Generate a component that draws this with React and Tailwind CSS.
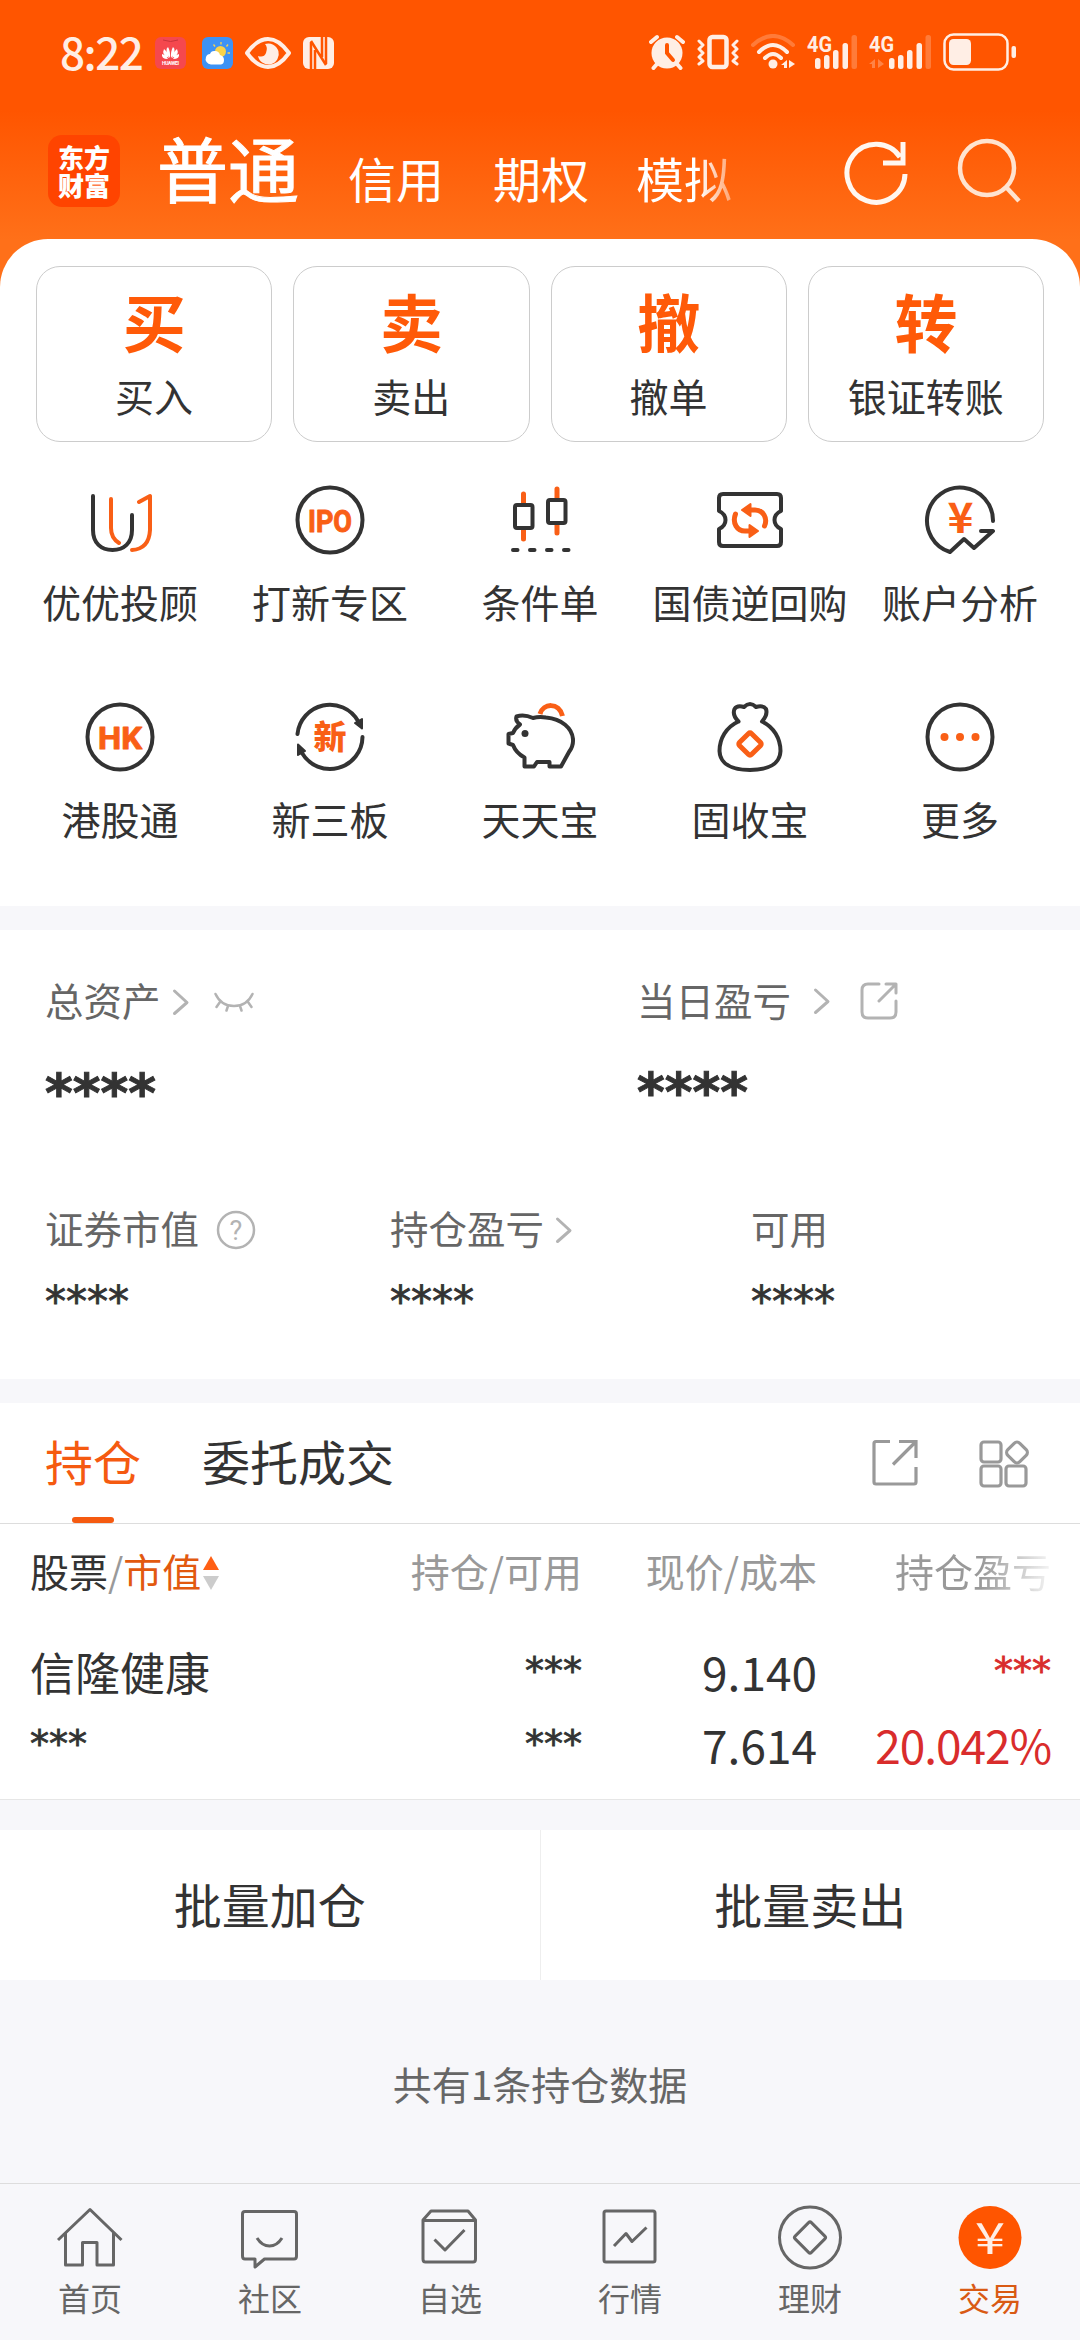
import React, { useState } from 'react';

const QuickIcon = ({ children }) => (
  <svg width="72" height="72" viewBox="0 0 72 72" fill="none" stroke="#333333" strokeWidth="4" strokeLinecap="round" strokeLinejoin="round">
    {children}
  </svg>
);

const NavIcon = ({ children }) => (
  <svg width="72" height="72" viewBox="0 0 72 72" fill="none" stroke="#666666" strokeWidth="3" strokeLinejoin="round">
    {children}
  </svg>
);

const Chevron = () => (
  <svg width="18" height="28" viewBox="0 0 18 28" fill="none" stroke="#b3b3b3" strokeWidth="3" strokeLinecap="round" strokeLinejoin="round">
    <path d="M2.500 3l12.500 11.500L2.500 25.500" />
  </svg>
);

const cards = [
  { icon: '买', label: '买入' },
  { icon: '卖', label: '卖出' },
  { icon: '撤', label: '撤单' },
  { icon: '转', label: '银证转账' },
];

const quickLinks = [
  {
    label: '优优投顾',
    icon: (
      <QuickIcon>
        <path d="M9 12V46C9 59 17 66 28.500 66S48 59 48 46V31" />
        <path stroke="#f95f16" d="M27 15V44Q27 54 35 59" />
        <path stroke="#f95f16" d="M55 18L66 12V46Q65 65 48 66" />
      </QuickIcon>
    ),
  },
  {
    label: '打新专区',
    icon: (
      <QuickIcon>
        <circle cx="36" cy="36" r="32.500" />
        <text x="14" y="47.500" fontSize="32" fontWeight="700" textLength="44" lengthAdjust="spacingAndGlyphs" fill="#f95f16" stroke="#f95f16" strokeWidth="1" className="font-[Roboto]">IPO</text>
      </QuickIcon>
    ),
  },
  {
    label: '条件单',
    icon: (
      <QuickIcon>
        <path stroke="#f95f16" d="M19.500 10V19M19.500 46V55M53 5V14M53 40V49" strokeWidth="5" />
        <rect x="11" y="21" width="17.500" height="23" rx="2" />
        <rect x="44" y="16" width="17.500" height="23" rx="2" />
        <path d="M9 66H13.500M26 66H30.500M43 66H47.500M60 66H64.500" />
      </QuickIcon>
    ),
  },
  {
    label: '国债逆回购',
    icon: (
      <QuickIcon>
        <path d="M9 10H63Q67 10 67 14V27Q60.500 30 60.500 36T67 45V58Q67 62 63 62H9Q5 62 5 58V45Q11.500 42 11.500 36T5 27V14Q5 10 9 10Z" />
        <path stroke="#f95f16" strokeWidth="5" d="M35 26H41C49 26 54 34 50.500 42M37 47H31C23 47 18 39 21.500 30" />
        <path fill="#f95f16" stroke="#f95f16" strokeWidth="2" d="M28 26L36.500 20V32ZM44 47L35.500 41V53Z" />
      </QuickIcon>
    ),
  },
  {
    label: '账户分析',
    icon: (
      <QuickIcon>
        <path d="M69 37A33 33 0 1 0 26 68L40 55L50 64L69 47H57" />
        <text x="23.500" y="49" fontSize="42" fontWeight="700" textLength="26" lengthAdjust="spacingAndGlyphs" fill="#f95f16" stroke="none">¥</text>
      </QuickIcon>
    ),
  },
  {
    label: '港股通',
    icon: (
      <QuickIcon>
        <circle cx="36" cy="36" r="32.500" />
        <text x="14" y="47.500" fontSize="32" fontWeight="700" textLength="44" lengthAdjust="spacingAndGlyphs" fill="#f95f16" stroke="#f95f16" strokeWidth="1" className="font-[Roboto]">HK</text>
      </QuickIcon>
    ),
  },
  {
    label: '新三板',
    icon: (
      <QuickIcon>
        <path d="M3.500 33A32.500 32.500 0 0 1 64 20M68.500 36A32.500 32.500 0 0 1 8 52" />
        <path fill="#333333" strokeWidth="2" d="M68 18V27.500L61 22ZM4 54V43.500L11 50Z" />
        <text x="36" y="48" textAnchor="middle" fontSize="33" fontWeight="900" fill="#f95f16" stroke="none">新</text>
      </QuickIcon>
    ),
  },
  {
    label: '天天宝',
    icon: (
      <QuickIcon>
        <path d="M12.500 15.500Q20 13 29 17Q35 15.500 42 16.500C58 18 68 27 69 38Q69.500 45 65 51L57 65.500H45.500V61H33L30 65.500H20.500V56.500Q12 52 9 44L4.500 42.500V33L9 32Q11 27 16 23.500Q11 20 12.500 15.500Z" />
        <path stroke="#f95f16" strokeWidth="5" strokeLinecap="butt" d="M36 13C39 2 55 1 58.500 15" />
        <circle cx="21" cy="32.500" r="3.500" fill="#333333" stroke="none" />
      </QuickIcon>
    ),
  },
  {
    label: '固收宝',
    icon: (
      <QuickIcon>
        <path d="M24.500 20.500Q18 14 20.500 8Q23 4 30 6Q36 0 42 6Q49 4 52 8Q54 14 48 20.500C60 26 66.500 38 66.500 50C66 63 54 69 36 69S6 63 5.500 50C5.500 38 12 26 24.500 20.500" />
        <rect x="27.500" y="34.500" width="17" height="17" rx="2" transform="rotate(45 36 43)" stroke="#f95f16" strokeWidth="5" />
      </QuickIcon>
    ),
  },
  {
    label: '更多',
    icon: (
      <QuickIcon>
        <circle cx="36" cy="36" r="32.500" />
        <g fill="#f95f16" stroke="none">
          <circle cx="20.500" cy="36" r="4" />
          <circle cx="36" cy="36" r="4" />
          <circle cx="51.500" cy="36" r="4" />
        </g>
      </QuickIcon>
    ),
  },
];

const navItems = [
  {
    label: '首页',
    icon: (
      <NavIcon>
        <path d="M4 39L36 8.500L67.500 39M11.500 32V64H28.500V41.500H43V64H59.500V32" />
      </NavIcon>
    ),
  },
  {
    label: '社区',
    icon: (
      <NavIcon>
        <path d="M11 10.500H60Q62.500 10.500 62.500 13V55Q62.500 58 60 58H30.500L21 66V58H11Q8.500 58 8.500 55V13Q8.500 10.500 11 10.500Z" />
        <path d="M23 37Q28 45 35.500 45T48 37" />
      </NavIcon>
    ),
  },
  {
    label: '自选',
    icon: (
      <NavIcon>
        <path d="M9 19L17 10H54L61.500 19V58Q61.500 61 59 61H11.500Q9 61 9 58ZM9 19.500H61.500M20.500 38.500L31 49L50.500 29" />
      </NavIcon>
    ),
  },
  {
    label: '行情',
    icon: (
      <NavIcon>
        <rect x="10" y="10" width="51" height="51" rx="2" />
        <path d="M20 45L32 32.500L38 40.500L52.500 26.500" />
      </NavIcon>
    ),
  },
  {
    label: '理财',
    icon: (
      <NavIcon>
        <circle cx="36" cy="36.500" r="30.500" />
        <rect x="24.500" y="25" width="23" height="23" rx="2" transform="rotate(45 36 36.500)" />
      </NavIcon>
    ),
  },
  {
    label: '交易',
    icon: (
      <NavIcon>
        <circle cx="36" cy="36.500" r="31.500" fill="#ff5500" stroke="none" />
        <text x="21" y="53" fontSize="43" textLength="30" lengthAdjust="spacingAndGlyphs" fill="#ffeee5" stroke="none">¥</text>
      </NavIcon>
    ),
  },
];

const Signal = ({ idle }) => (
  <svg width={idle ? 64 : 52} height="36" viewBox={idle ? '0 0 64 36' : '0 0 52 36'} fill="#ffeee5" className="overflow-visible">
    <text x="0" y="17.500" fontSize="22" fontWeight="700" textLength="25" lengthAdjust="spacingAndGlyphs" className="font-[Roboto]">4G</text>
    <g transform={idle ? 'translate(12 0)' : undefined}>
      <rect x="8" y="24" width="5.500" height="11" rx="2.500" />
      <rect x="17" y="21" width="5.500" height="14" rx="2.500" />
      <rect x="26" y="16" width="5.500" height="19" rx="2.500" />
      <rect x="35.500" y="9" width="5.500" height="26" rx="2.500" />
      <rect x="44.500" y="1" width="5.500" height="34" rx="2.500" opacity="0.250" />
    </g>
    {idle && <path opacity="0.300" d="M6 25V34H3V30H0ZM9 25L15 30L9 34Z" />}
  </svg>
);

const StatusBar = () => (
  <div className="flex h-[106px] items-center justify-between pl-[60px] pr-[63px]">
    <div className="flex items-center">
      <span className="-mt-[5px] w-[95px] text-[44px] font-medium leading-none tracking-[-1.5px] text-[#ffeee5]">8:22</span>
      <svg width="31" height="32" viewBox="0 0 31 32" className="mr-4">
        <rect width="31" height="32" rx="6" fill="#f5484e" />
        <path d="M8 3Q15.500 6 23 3" stroke="#c9353b" fill="none" />
        <g fill="#fff">
          <path d="M15 21Q9 13 13 10Q15.500 14 15 21ZM16 21Q22 13 18 10Q15.500 14 16 21ZM14 21Q6 18 9 12Q13 15 14 21ZM17 21Q25 18 22 12Q18 15 17 21ZM13 22Q6 22 7 17Q11 18 13 22ZM18 22Q25 22 24 17Q20 18 18 22Z" />
          <text x="7" y="27.500" fontSize="5" fontWeight="700" textLength="17" className="font-[Roboto]">HUAWEI</text>
        </g>
      </svg>
      <svg width="31" height="32" viewBox="0 0 31 32" className="mr-3">
        <rect width="31" height="32" rx="6" fill="#3d92f5" />
        <circle cx="18.500" cy="14.500" r="5.500" fill="#f9d34a" />
        <path d="M19 5V7.500M11.500 7.500L13 9.500M26 7.500L24.500 9.500M25.500 16H28" stroke="#f9d34a" strokeWidth="1.300" />
        <path d="M9 27.500A5.500 5.500 0 0 1 4 20Q5 17 8 17Q9 13.500 13 14Q17 14 18 18Q22 19 22 23Q22 27 19 27.500Z" fill="#fff" />
      </svg>
      <svg width="46" height="34" viewBox="0 0 46 34" fill="none" className="mr-3">
        <path d="M2 17Q12 3 23 3T44 17Q34 31 23 31T2 17Z" stroke="#ffeee5" strokeWidth="4" strokeLinejoin="round" />
        <path d="M20 8A10.500 10.500 0 1 1 13 20Q19 22 21 17Q23 11 20 8Z" fill="#ffeee5" />
      </svg>
      <svg width="31" height="32" viewBox="0 0 31 32">
        <rect width="31" height="32" rx="6" fill="#ffeee5" />
        <path d="M8 32V5M23 0V27" stroke="#ff5500" strokeWidth="2.500" />
        <path d="M8 4L23 28M12 13V32M19 20V0" stroke="#ff5500" strokeWidth="2.500" />
      </svg>
    </div>
    <div className="-mt-[2px] flex items-center">
      <svg width="36" height="36" viewBox="0 0 36 36" fill="none" className="mr-3">
        <circle cx="18" cy="19" r="15.500" fill="#ffeee5" />
        <path d="M2 8L8 3M34 8L28 3M8 30L4.500 34M28 30L31.500 34" stroke="#ffeee5" strokeWidth="4" strokeLinecap="round" />
        <path d="M18 11V19L24 26" stroke="#ff5500" strokeWidth="4" strokeLinecap="round" />
      </svg>
      <svg width="42" height="36" viewBox="0 0 42 36" fill="none" stroke="#ffeee5" strokeLinejoin="round" strokeLinecap="round" className="mr-3">
        <rect x="12.500" y="3" width="17" height="30" rx="3" strokeWidth="4.500" />
        <path d="M2 7L6 11L2 15L6 19L2 23L6 27L2 30M40 7L36 11L40 15L36 19L40 23L36 27L40 30" strokeWidth="3" />
      </svg>
      <svg width="44" height="36" viewBox="0 0 44 36" fill="none" stroke="#ffeee5" strokeWidth="4" strokeLinecap="round" className="mr-3">
        <path d="M2 11Q22 -7 42 11" opacity="0.250" />
        <path d="M8 18Q22 4 36 18M14 24Q22 16 30 24" />
        <circle cx="22" cy="30" r="4.500" fill="#ffeee5" stroke="none" />
        <path d="M36 26V34H33V31H30ZM38 26L44 30L38 34Z" fill="#ffeee5" stroke="none" />
      </svg>
      <Signal />
      <div className="w-[10px]"></div>
      <Signal idle />
      <svg width="74" height="38" viewBox="0 0 74 38" className="ml-[10px]">
        <rect x="1.500" y="1.500" width="63" height="35" rx="9" fill="none" stroke="#ffeee5" strokeWidth="2.500" />
        <rect x="6" y="6" width="22" height="26" rx="4.500" fill="#ffeee5" />
        <rect x="68.500" y="13" width="4.500" height="12" rx="2" fill="#ffeee5" />
      </svg>
    </div>
  </div>
);

const Header = () => (
  <div className="flex h-[133px] items-end text-white">
    <div className="mb-8 ml-12 flex h-[72px] w-[72px] items-center justify-center rounded-[14px] bg-[#ff4400]">
      <span className="w-[52px] break-all text-[26px] font-black leading-[28px]">东方财富</span>
    </div>
    <h1 className="mb-[35px] ml-[37px] w-[191px] text-[71px] leading-[76px] [-webkit-text-stroke:1px_#ffffff]">普通</h1>
    <span className="mb-[36px] w-[145px] text-[48px] leading-[52px]">信用</span>
    <span className="mb-[36px] w-[143px] text-[48px] leading-[52px]">期权</span>
    <span className="mb-[36px] w-[96px] bg-linear-to-r from-white from-65% to-white/40 bg-clip-text text-[48px] leading-[52px] text-transparent">模拟</span>
    <svg width="66" height="68" viewBox="0 0 66 68" fill="none" stroke="#fff7f0" strokeWidth="5" className="mb-[34px] ml-[111px]">
      <path d="M62 37A29 29 0 1 1 57 20M60 5V26H40" />
    </svg>
    <svg width="66" height="68" viewBox="0 0 66 68" fill="none" stroke="#ffe3cf" strokeWidth="4.500" className="mb-[34px] ml-[48px]">
      <circle cx="30" cy="31" r="27" />
      <path d="M49 50L62 64" />
    </svg>
  </div>
);

const Stars = ({ big }) =>
  big ? (
    <div className="font-['DejaVu_Sans'] text-[53px] font-bold leading-[54px] text-[#333333] [-webkit-text-stroke:1px_#333333]">****</div>
  ) : (
    <div className="font-['DejaVu_Sans'] text-[42px] leading-[42px] text-[#333333] [-webkit-text-stroke:0.8px_#333333]">****</div>
  );

const Assets = () => (
  <div className="h-[449px] bg-white pl-[45px] text-[38.5px] leading-[44px] text-[#666666]">
    <div className="flex pt-[48px]">
      <div className="w-[592px]">
        <div className="flex h-[44px] items-center">
          <span className="-mt-[3px]">总资产</span>
          <div className="ml-[11px] mt-[3px]"><Chevron /></div>
          <svg width="40" height="20" viewBox="0 0 40 20" fill="none" stroke="#b3b3b3" strokeWidth="2.500" strokeLinecap="round" className="ml-[24px] mt-1">
            <path d="M1.500 2Q7 14 20 14T38.500 2M6 10L2.500 15M14 14L12.500 18.500M26 14L27.500 18.500M34 10L37.500 15" />
          </svg>
        </div>
        <div className="pt-[45px]"><Stars big /></div>
      </div>
      <div>
        <div className="flex h-[44px] items-center">
          <span className="-mt-[2px]">当日盈亏</span>
          <div className="ml-[22px] mt-[1px]"><Chevron /></div>
          <svg width="40" height="40" viewBox="0 0 40 40" fill="none" stroke="#b3b3b3" strokeWidth="3" strokeLinecap="round" strokeLinejoin="round" className="ml-[28px] mt-[2px]">
            <path d="M20 3H9Q3 3 3 9V31Q3 37 9 37H31Q37 37 37 31V20M27 3H37V12M36 4L20 20" />
          </svg>
        </div>
        <div className="pt-[44px]"><Stars big /></div>
      </div>
    </div>
    <div className="flex pt-[85px]">
      <div className="w-[345px]">
        <div className="flex h-[44px] items-center">
          <span className="-mt-[3px]">证券市值</span>
          <svg width="40" height="40" viewBox="0 0 40 40" className="ml-[17px] mt-1">
            <circle cx="20" cy="20" r="18" fill="none" stroke="#b3b3b3" strokeWidth="2.500" />
            <text x="20" y="30" textAnchor="middle" fontSize="27" fill="#b3b3b3" className="font-[Roboto]">?</text>
          </svg>
        </div>
        <div className="pt-[31px]"><Stars /></div>
      </div>
      <div className="w-[361px]">
        <div className="flex h-[44px] items-center">
          <span className="-mt-[3px]">持仓盈亏</span>
          <div className="ml-[11px] mt-1"><Chevron /></div>
        </div>
        <div className="pt-[31px]"><Stars /></div>
      </div>
      <div>
        <div className="flex h-[44px] items-center"><span className="-mt-[3px]">可用</span></div>
        <div className="pt-[31px]"><Stars /></div>
      </div>
    </div>
  </div>
);

const Holdings = () => {
  const [tab, setTab] = useState('持仓');
  return (
    <div className="bg-white">
      <div className="flex h-[121px] items-start justify-between border-b border-[#dddddd] pl-[45px] pr-[51px]">
        <div className="flex gap-[61px] text-[48px] leading-[54px]">
          {['持仓', '委托成交'].map((t) => (
            <button key={t} type="button" onClick={() => setTab(t)} className="flex h-[120px] flex-col items-center justify-between pt-[30px]">
              <span className={tab === t ? 'text-[#f55a10]' : 'text-[#333333]'}>{t}</span>
              {tab === t ? <div className="h-[6px] w-[42px] rounded-full bg-[#f55a10]"></div> : null}
            </button>
          ))}
        </div>
        <div className="flex gap-[57px] pt-[35px]">
          <svg width="50" height="50" viewBox="0 0 50 50" fill="none" stroke="#999999" strokeWidth="3.200">
            <path d="M20 3.500H6Q4 3.500 4 5.500V44Q4 46 6 46H44Q46 46 46 44V29M29 3.500H46V20M46 3.500L23 26.500" />
          </svg>
          <svg width="52" height="52" viewBox="0 0 52 52" fill="none" stroke="#999999" strokeWidth="3.200">
            <rect x="4" y="4" width="20" height="20" rx="3" />
            <rect x="4" y="28" width="20" height="20" rx="3" />
            <rect x="29" y="28" width="20" height="20" rx="3" />
            <rect x="31.500" y="6" width="17" height="17" rx="4" transform="rotate(45 40 14.500)" />
          </svg>
        </div>
      </div>
      <div className="flex h-[92px] items-center pl-[30px] pr-[29px] text-[39px] leading-[44px] text-[#999999]">
        <div className="flex w-[300px] items-center">
          <span className="text-[#333333]">股票</span>
          <span>/</span>
          <span className="text-[#e2590f]">市值</span>
          <svg width="16" height="34" viewBox="0 0 16 34" className="ml-[2px] mt-[6px]">
            <path d="M8 0L16 14H0Z" fill="#ff5f14" />
            <path d="M8 34L16 20H0Z" fill="#cccccc" />
          </svg>
        </div>
        <div className="w-[252px] text-right">持仓/可用</div>
        <div className="w-[235px] text-right">现价/成本</div>
        <div className="flex flex-1 justify-end">
          <span className="bg-linear-to-r from-[#999999] from-55% to-[#999999]/10 bg-clip-text text-transparent">持仓盈亏</span>
        </div>
      </div>
      <div className="flex h-[184px] border-b border-[#e6e6e6] pl-[30px] pr-[29px] pt-[19px] text-[46px] leading-[73px] text-[#333333]">
        <div className="w-[300px]">
          <div className="text-[45px]">信隆健康</div>
          <div className="font-['DejaVu_Sans'] text-[38px] [-webkit-text-stroke:0.8px_#333333]">***</div>
        </div>
        <div className="w-[252px] text-right font-['DejaVu_Sans'] text-[38px] [-webkit-text-stroke:0.8px_#333333]">
          <div>***</div>
          <div>***</div>
        </div>
        <div className="w-[235px] text-right">
          <div>9.140</div>
          <div>7.614</div>
        </div>
        <div className="flex-1 text-right text-[#d92c2c]">
          <div className="font-['DejaVu_Sans'] text-[38px] [-webkit-text-stroke:0.8px_#d92c2c]">***</div>
          <div className="tracking-[-1px]">20.042%</div>
        </div>
      </div>
    </div>
  );
};

const App = () => {
  return (
    <div className="h-[2340px] w-[1080px] overflow-hidden bg-[#f7f7fa] font-['Noto_Sans_CJK_SC',sans-serif]">
      <div className="bg-[linear-gradient(#ff5500_110px,#ff7019_240px)]">
        <StatusBar />
        <Header />
        <div className="h-[667px] rounded-t-[48px] bg-white pt-[27px]">
          <div className="grid grid-cols-4 gap-[21px] px-9">
            {cards.map((c) => (
              <div key={c.label} className="flex h-[176px] flex-col items-center rounded-[24px] border border-[#cccccc]">
                <span className="mt-[21px] text-[63px] font-bold leading-[64px] text-[#ff5a08]">{c.icon}</span>
                <span className="mt-[21px] text-[39px] leading-[44px] text-[#333333]">{c.label}</span>
              </div>
            ))}
          </div>
          <div className="grid grid-cols-5 px-[15px] pt-[42px]">
            {quickLinks.map((q) => (
              <div key={q.label} className="flex h-[217px] flex-col items-center">
                {q.icon}
                <span className="mt-[23px] whitespace-nowrap text-[39px] leading-[44px] text-[#333333]">{q.label}</span>
              </div>
            ))}
          </div>
        </div>
      </div>

      <div className="h-6"></div>
      <Assets />
      <div className="h-6"></div>
      <Holdings />

      <div className="mt-[30px] flex h-[150px] bg-white text-[48px] text-[#333333]">
        <button type="button" className="flex-1 border-r border-[#eeeeee] pb-[5px]">批量加仓</button>
        <button type="button" className="flex-1 pb-[5px]">批量卖出</button>
      </div>
      <div className="flex h-[203px] items-center justify-center pt-1 text-[39px] text-[#666666]">共有1条持仓数据</div>

      <div className="grid h-[157px] grid-cols-6 border-t border-[#dddddd]">
        {navItems.map((n) => (
          <div key={n.label} className="flex flex-col items-center pt-[17px]">
            {n.icon}
            <span className={n.label === '交易' ? 'mt-[4px] text-[32px] leading-[40px] text-[#d95a14]' : 'mt-[4px] text-[32px] leading-[40px] text-[#666666]'}>{n.label}</span>
          </div>
        ))}
      </div>
    </div>
  );
};

export default App;
